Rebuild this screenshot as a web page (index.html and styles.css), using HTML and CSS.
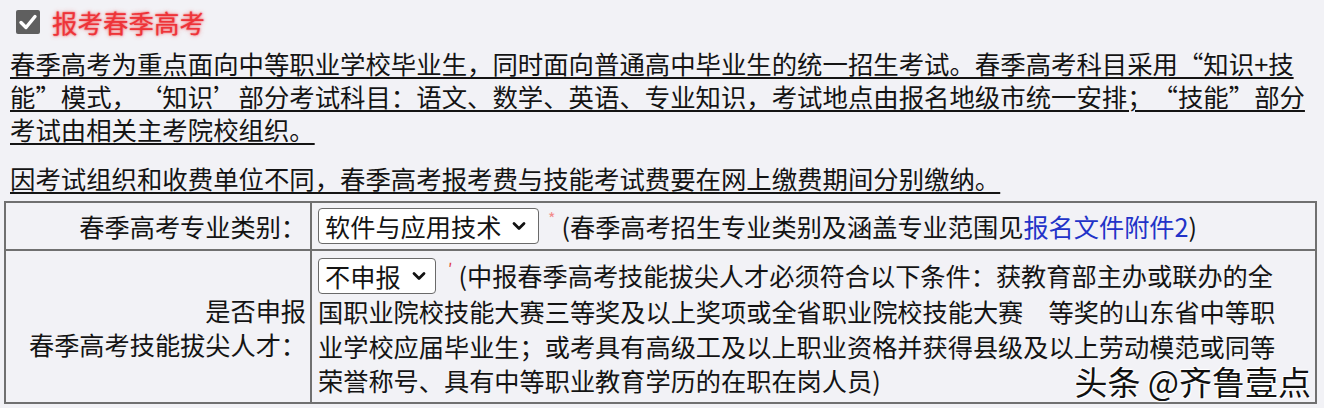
FILE: index.html
```html
<!DOCTYPE html>
<html lang="zh-CN">
<head>
<meta charset="utf-8">
<title>报考春季高考</title>
<link rel="stylesheet" href="styles.css">
</head>
<body>
<div class="page">
  <div class="header">
    <span class="checkbox"><svg viewBox="0 0 24 24" width="24" height="24"><path d="M5 12.5 L10 17.5 L19 6.5" fill="none" stroke="#fff" stroke-width="3.4" stroke-linecap="round" stroke-linejoin="round"/></svg></span>
    <span class="title">报考春季高考</span>
  </div>
  <p class="note first"><span class="u">春季高考为重点面向中等职业学校毕业生，同时面向普通高中毕业生的统一招生考试。春季高考科目采用“知识+技</span><br><span class="u">能”模式，‘知识’部分考试科目：语文、数学、英语、专业知识，考试地点由报名地级市统一安排；“技能”部分</span><br><span class="u">考试由相关主考院校组织。</span></p>
  <p class="note second"><span class="u">因考试组织和收费单位不同，春季高考报考费与技能考试费要在网上缴费期间分别缴纳。</span></p>
  <div class="table-wrap">
    <table class="form">
      <tr class="row1">
        <th class="label">春季高考专业类别：</th>
        <td class="field">
          <span class="select wide">软件与应用技术<svg class="chev" viewBox="0 0 16 16" width="16" height="16"><path d="M3 5.5 L8 10.5 L13 5.5" fill="none" stroke="#111" stroke-width="2.8" stroke-linecap="round" stroke-linejoin="round"/></svg></span><span class="req">*</span><span class="hint">(春季高考招生专业类别及涵盖专业范围见<a class="link" href="#">报名文件附件2</a>)</span>
        </td>
      </tr>
      <tr class="row2">
        <th class="label">是否申报<br>春季高考技能拔尖人才：</th>
        <td class="field">
          <div class="lines"><span class="select narrow">不申报<svg class="chev" viewBox="0 0 16 16" width="16" height="16"><path d="M3 5.5 L8 10.5 L13 5.5" fill="none" stroke="#111" stroke-width="2.8" stroke-linecap="round" stroke-linejoin="round"/></svg></span><span class="req mark">′</span>(中报春季高考技能拔尖人才必须符合以下条件：获教育部主办或联办的全<br>国职业院校技能大赛三等奖及以上奖项或全省职业院校技能大赛　等奖的山东省中等职<br>业学校应届毕业生；或考具有高级工及以上职业资格并获得县级及以上劳动模范或同等<br>荣誉称号、具有中等职业教育学历的在职在岗人员)</div>
        </td>
      </tr>
    </table>
    <div class="watermark">头条 @齐鲁壹点</div>
  </div>
</div>
</body>
</html>
```

FILE: styles.css
```css
html, body {
  margin: 0;
  padding: 0;
  background: #f2f2f6;
}
body {
  font-family: "Noto Sans CJK SC", "Noto Sans", sans-serif;
  color: #141414;
  text-spacing-trim: space-all;
}
.page {
  padding: 0 7px 0 4px;
}
.header {
  display: flex;
  align-items: center;
  gap: 12px;
  height: 44px;
  padding-left: 12px;
}
.checkbox {
  display: flex;
  width: 24px;
  height: 24px;
  background: #5f5f5f;
  border-radius: 2px;
}
.title {
  font-size: 25.5px;
  line-height: 30px;
  color: #ee3338;
  text-shadow: 0 0 2px rgba(240, 40, 45, 0.8), 0 0 5px rgba(240, 60, 60, 0.45);
}
.note {
  margin: 0 0 0 6px;
  font-size: 25.4px;
  line-height: 33px;
  white-space: nowrap;
}
.note.first {
  margin-top: 3px;
}
.note.second {
  margin-top: 16px;
}
.u {
  text-decoration: underline;
  text-decoration-thickness: 2px;
  text-underline-offset: 3px;
}
.table-wrap {
  position: relative;
  margin-top: 6px;
  width: 1313px;
}
.form {
  width: 100%;
  border-collapse: collapse;
  border: 2px solid #707070;
  font-size: 25.2px;
}
.form th, .form td {
  border: 2px solid #707070;
}
.label {
  width: 292px;
  font-weight: normal;
  text-align: right;
  vertical-align: middle;
  padding: 0 4px 0 8px;
  line-height: 34px;
  white-space: nowrap;
}
.field {
  padding: 0 6px;
  white-space: nowrap;
}
.row1 {
  height: 48px;
}
.row1 .field {
  vertical-align: middle;
  line-height: 37px;
}
.row2 {
  height: 153px;
}
.row2 .field {
  vertical-align: top;
  padding-top: 7px;
  padding-bottom: 0;
}
.lines {
  line-height: 34.5px;
  height: 138px;
}
.select {
  display: inline-flex;
  align-items: center;
  gap: 10px;
  height: 36px;
  box-sizing: border-box;
  padding: 0 8px 0 6px;
  background: #fff;
  border: 1px solid #6a6a6a;
  border-radius: 4px;
  line-height: 34px;
  vertical-align: top;
}
.select.wide {
  width: 221px;
}
.select.narrow {
  width: 118px;
}
.chev {
  flex: none;
}
.req {
  display: inline-block;
  margin: 0 6px 0 9px;
  color: #f28b8b;
  font-size: 16px;
  line-height: 16px;
  vertical-align: top;
  position: relative;
  top: 2px;
}
.req.mark {
  color: #e04040;
  margin: 0 6px 0 12px;
}
.link {
  color: #2233c8;
  text-decoration: none;
}
.watermark {
  position: absolute;
  right: 6px;
  bottom: 6px;
  font-size: 33px;
  line-height: 34px;
  color: #111;
  text-shadow: 0 0 2px #fff, 0 0 3px #fff, 1px 1px 0 #fff, -1px -1px 0 #fff;
}
```
